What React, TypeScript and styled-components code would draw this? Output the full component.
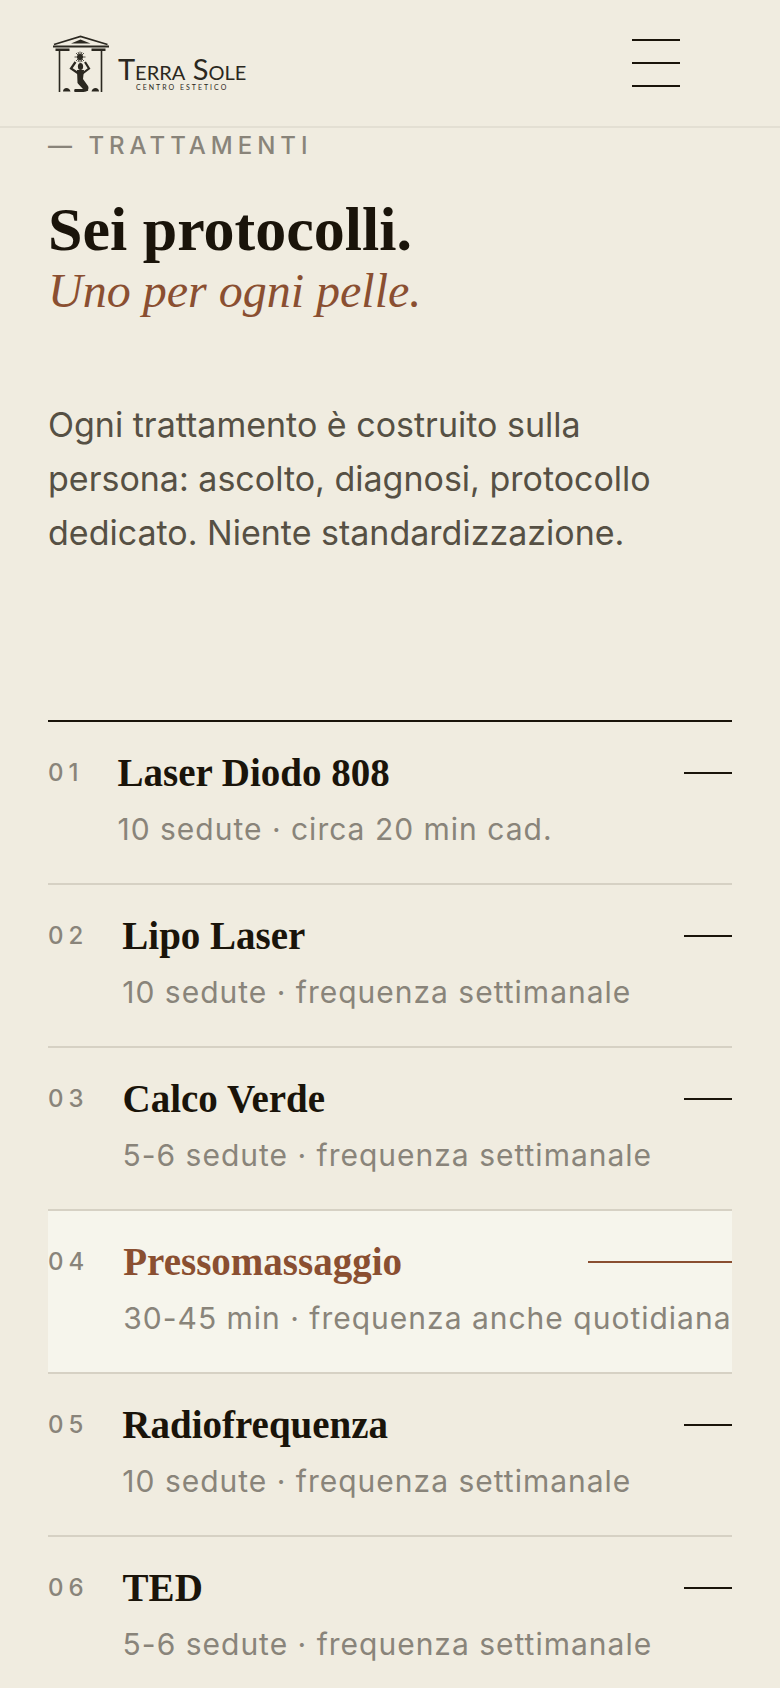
import React from "react";
import styled, { createGlobalStyle } from "styled-components";

const ink = "#1a140a";
const sand = "#f0ece0";
const clay = "#8a4f31";
const stone = "#89847a";

const GlobalStyle = createGlobalStyle`
    * {
        box-sizing: border-box;
    }
    body {
        margin: 0;
        background: ${sand};
        color: ${ink};
        font-family: Inter, "Open Sans", sans-serif;
    }
`;

const Header = styled.header`
    display: flex;
    align-items: center;
    justify-content: space-between;
    height: 128px;
    padding: 0 100px 0 52px;
    border-bottom: 2px solid #e3dfd3;
`;

const Brand = styled.a`
    display: flex;
    align-items: center;
    gap: 8px;
    color: #2b2820;
    text-decoration: none;
`;

const BrandText = styled.span`
    display: flex;
    flex-direction: column;
    align-items: center;
    padding-top: 20px;
`;

const BrandName = styled.span`
    font-family: Lato, sans-serif;
    font-size: 29px;
    line-height: 28px;
    font-variant: small-caps;
    white-space: nowrap;
`;

const BrandTag = styled.span`
    font-family: Lato, sans-serif;
    font-size: 7px;
    line-height: 8px;
    letter-spacing: 2px;
    text-transform: uppercase;
    white-space: nowrap;
`;

const MenuButton = styled.button`
    display: flex;
    flex-direction: column;
    gap: 21px;
    width: 48px;
    padding: 0;
    border: 0;
    background: none;
    cursor: pointer;
`;

const MenuBar = styled.span`
    height: 2px;
    background: ${ink};
`;

const Section = styled.section`
    padding: 0 48px;
`;

const Eyebrow = styled.p`
    margin: 0;
    padding-top: 2px;
    color: ${stone};
    font-size: 24px;
    font-weight: 500;
    line-height: 32px;
    letter-spacing: 5px;
    text-transform: uppercase;
`;

const Heading = styled.h2`
    margin: 36px 0 0;
    font-family: "Liberation Serif", serif;
    font-size: 62px;
    font-weight: 700;
    line-height: 62px;
`;

const Accent = styled.em`
    display: block;
    color: ${clay};
    font-size: 48px;
    font-weight: 400;
`;

const Intro = styled.p`
    max-width: 640px;
    margin: 76px 0 160px;
    color: #565044;
    font-size: 34px;
    line-height: 54px;
`;

const List = styled.ul`
    margin: 0;
    padding: 0;
    border-top: 2px solid ${ink};
    list-style: none;
`;

const Title = styled.h3<{ $active?: boolean }>`
    margin: 0;
    color: ${({ $active }) => ($active ? clay : ink)};
    font-family: "Liberation Serif", serif;
    font-size: 39px;
    font-weight: 700;
    line-height: 44px;
`;

const Dash = styled.span<{ $active?: boolean }>`
    width: ${({ $active }) => ($active ? "144px" : "48px")};
    height: 2px;
    background: ${({ $active }) => ($active ? clay : ink)};
`;

const Row = styled.a<{ $active?: boolean }>`
    display: flex;
    gap: 34px;
    padding: 29px 0 34px;
    border-bottom: 2px solid #d6d1c4;
    background: ${({ $active }) => ($active ? "#f6f5ec" : "transparent")};
    color: inherit;
    text-decoration: none;
`;

const Index = styled.span`
    color: ${stone};
    font-size: 24px;
    font-weight: 500;
    line-height: 44px;
    letter-spacing: 5px;
`;

const RowBody = styled.div`
    flex: 1;
    min-width: 0;
`;

const RowHead = styled.div`
    display: flex;
    align-items: center;
    justify-content: space-between;
`;

const Detail = styled.p`
    margin: 14px 0 0;
    color: ${stone};
    font-size: 30px;
    line-height: 40px;
    letter-spacing: 1px;
    white-space: nowrap;
`;

type Treatment = {
    name: string;
    detail: string;
    active?: boolean;
};

const treatments: Treatment[] = [
    { name: "Laser Diodo 808", detail: "10 sedute · circa 20 min cad." },
    { name: "Lipo Laser", detail: "10 sedute · frequenza settimanale" },
    { name: "Calco Verde", detail: "5-6 sedute · frequenza settimanale" },
    {
        name: "Pressomassaggio",
        detail: "30-45 min · frequenza anche quotidiana",
        active: true,
    },
    { name: "Radiofrequenza", detail: "10 sedute · frequenza settimanale" },
    { name: "TED", detail: "5-6 sedute · frequenza settimanale" },
];

const TempleMark = () => (
    <svg width="58" height="60" viewBox="0 0 58 60" fill="none" aria-hidden="true">
        <g stroke="currentColor">
            <path d="M2 11.500 28.500 3.500l27 8" strokeWidth="1.800" />
            <path d="M1 13.500h56" strokeWidth="2.200" />
            <path d="M7.500 16v43M49.500 16v43" strokeWidth="1.600" />
            <path
                d="M28 18.500v11M22.500 24h11M24 20l8 8M32 20l-8 8M26 19l4 10M30 19l-4 10"
                strokeWidth="0.800"
            />
            <path d="M23.500 29l-4.500 6.500 7.500 5M33 29l4 6.500-6.500 5" strokeWidth="2.200" />
            <path d="M23 57h11l-7-7" strokeWidth="2" />
        </g>
        <g fill="currentColor">
            <path d="M19 10.500 28.500 6.500l10 4z" />
            <path d="M3.500 15.500h14v2.500h-14zM39.500 15.500h14v2.500h-14z" />
            <circle cx="28" cy="24" r="3" />
            <ellipse cx="28.500" cy="33.500" rx="2.600" ry="3.600" />
            <path d="M25 37h7l-1 9 5 7c1.500 3-.5 6-4.500 6H22.500l-.5-2.500 9-.5-5.500-6z" />
            <path d="M11 58.500c0-2 1.500-3.500 3.500-3.500s3.500 1.500 4 3.500zM39.500 58.500c.5-2 2-3.500 4-3.500s3.500 1.500 3.500 3.500z" />
        </g>
    </svg>
);

const TreatmentRow = (props: { index: number; item: Treatment }) => {
    const { name, detail, active } = props.item;
    return (
        <li>
            <Row href="#" $active={active}>
                <Index>{String(props.index).padStart(2, "0")}</Index>
                <RowBody>
                    <RowHead>
                        <Title $active={active}>{name}</Title>
                        <Dash $active={active} />
                    </RowHead>
                    <Detail>{detail}</Detail>
                </RowBody>
            </Row>
        </li>
    );
};

export default function App() {
    return (
        <>
            <GlobalStyle />
            <Header>
                <Brand href="#">
                    <TempleMark />
                    <BrandText>
                        <BrandName>Terra Sole</BrandName>
                        <BrandTag>Centro estetico</BrandTag>
                    </BrandText>
                </Brand>
                <MenuButton type="button" aria-label="Menu">
                    <MenuBar />
                    <MenuBar />
                    <MenuBar />
                </MenuButton>
            </Header>
            <Section>
                <Eyebrow>— Trattamenti</Eyebrow>
                <Heading>
                    Sei protocolli.
                    <Accent>Uno per ogni pelle.</Accent>
                </Heading>
                <Intro>
                    Ogni trattamento è costruito sulla persona: ascolto, diagnosi,
                    protocollo dedicato. Niente standardizzazione.
                </Intro>
                <List>
                    {treatments.map((item, i) => (
                        <TreatmentRow key={item.name} index={i + 1} item={item} />
                    ))}
                </List>
            </Section>
        </>
    );
}
